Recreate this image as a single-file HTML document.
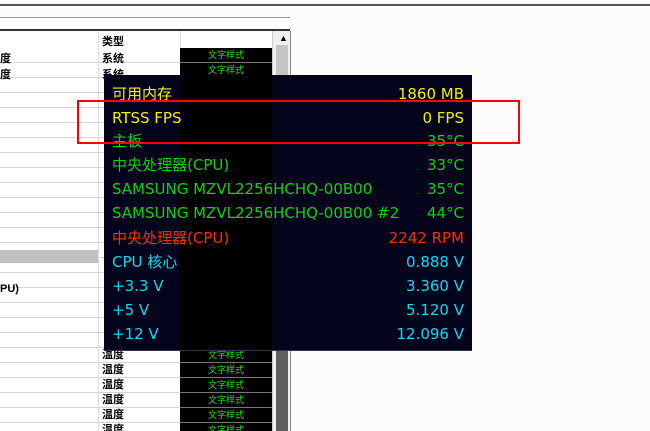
<!DOCTYPE html><html><head><meta charset="utf-8"><style>
html,body{margin:0;overflow:hidden;width:650px;height:431px}
body{background:#fcfcfc;position:relative;font-family:"Liberation Sans","Noto Sans CJK SC",sans-serif}
.a{position:absolute}
.t{font-size:11px;color:#000;font-weight:bold}
.cell{position:absolute;left:180px;width:92px;height:14px;background:#000;border-bottom:1px solid #777;color:#20e020;font-size:9px;text-align:center;line-height:14px}
.ov{position:absolute;left:104px;top:75px;width:368px;height:275px;background:#03031c;border-bottom:1px solid #334;overflow:hidden}
.r{position:absolute;left:8px;right:8px;height:24px;font-family:"DejaVu Sans","Noto Sans CJK SC",sans-serif;font-size:15px;line-height:24px}
.r span{position:absolute;right:0}
</style></head><body>
<div class="a" style="left:0;top:4px;width:650px;height:2px;background:#555"></div>
<div class="a" style="left:0;top:17px;width:290px;height:1px;background:#999"></div>
<div class="a" style="left:0;top:29px;width:290px;height:2px;background:#333"></div>
<div class="a" style="left:0;top:31px;width:272px;height:400px;background:#fff"></div>
<div class="a" style="left:0;top:48px;width:180px;height:383px;background:repeating-linear-gradient(to bottom,transparent 0 14px,#d4d4d4 14px 15px)"></div>
<div class="a" style="left:0;top:250px;width:98px;height:13px;background:#c0c0c0"></div>
<div class="a" style="left:98px;top:31px;width:1px;height:400px;background:#ddd"></div>
<div class="a" style="left:180px;top:31px;width:1px;height:17px;background:#ddd"></div>
<div class="a t" style="left:102px;top:33px">类型</div>
<div class="a t" style="left:0;top:50px">度</div><div class="a t" style="left:102px;top:50px">系统</div>
<div class="a t" style="left:0;top:66px">度</div><div class="a t" style="left:102px;top:66px">系统</div>
<div class="a t" style="left:0;top:283px">PU)</div>
<div class="cell" style="top:48px">文字样式</div><div class="cell" style="top:63px">文字样式</div>
<div class="cell" style="top:78px;height:270px"></div>
<div class="cell" style="top:348px">文字样式</div><div class="cell" style="top:363px">文字样式</div><div class="cell" style="top:378px">文字样式</div><div class="cell" style="top:393px">文字样式</div><div class="cell" style="top:408px">文字样式</div><div class="cell" style="top:423px">文字样式</div>
<div class="a t" style="left:102px;top:346px">温度</div><div class="a t" style="left:102px;top:361px">温度</div><div class="a t" style="left:102px;top:376px">温度</div><div class="a t" style="left:102px;top:391px">温度</div><div class="a t" style="left:102px;top:406px">温度</div><div class="a t" style="left:102px;top:421px">温度</div>
<div class="a" style="left:272px;top:31px;width:18px;height:400px;background:#f0f0f0;border-left:1px solid #ccc"></div>
<div class="a" style="left:279px;top:33px;font-size:9px">▲</div>
<div class="a" style="left:276px;top:45px;width:12px;height:32px;background:#c4c4c4"></div>
<div class="a" style="left:276px;top:350px;width:12px;height:81px;background:#606060"></div>
<div class="a" style="left:290px;top:31px;width:1px;height:400px;background:#888"></div>
<div class="ov">
<div class="a" style="left:76px;top:0;width:92px;height:275px;background:#000"></div>
<div class="r" style="top:7px;color:#f0f000">可用内存<span>1860 MB</span></div>
<div class="r" style="top:31px;color:#f0f000">RTSS FPS<span>0 FPS</span></div>
<div class="r" style="top:54px;color:#10d010">主板<span>35°C</span></div>
<div class="r" style="top:78px;color:#10d010">中央处理器(CPU)<span>33°C</span></div>
<div class="r" style="top:102px;color:#10d010">SAMSUNG MZVL2256HCHQ-00B00<span>35°C</span></div>
<div class="r" style="top:126px;color:#10d010">SAMSUNG MZVL2256HCHQ-00B00 #2<span>44°C</span></div>
<div class="r" style="top:151px;color:#ff2a00">中央处理器(CPU)<span>2242 RPM</span></div>
<div class="r" style="top:175px;color:#10d8f0">CPU 核心<span>0.888 V</span></div>
<div class="r" style="top:199px;color:#10d8f0">+3.3 V<span>3.360 V</span></div>
<div class="r" style="top:223px;color:#10d8f0">+5 V<span>5.120 V</span></div>
<div class="r" style="top:247px;color:#10d8f0">+12 V<span>12.096 V</span></div>
</div>
<div class="a" style="left:77px;top:100px;width:439px;height:40px;border:2px solid #f00"></div>
</body></html>
